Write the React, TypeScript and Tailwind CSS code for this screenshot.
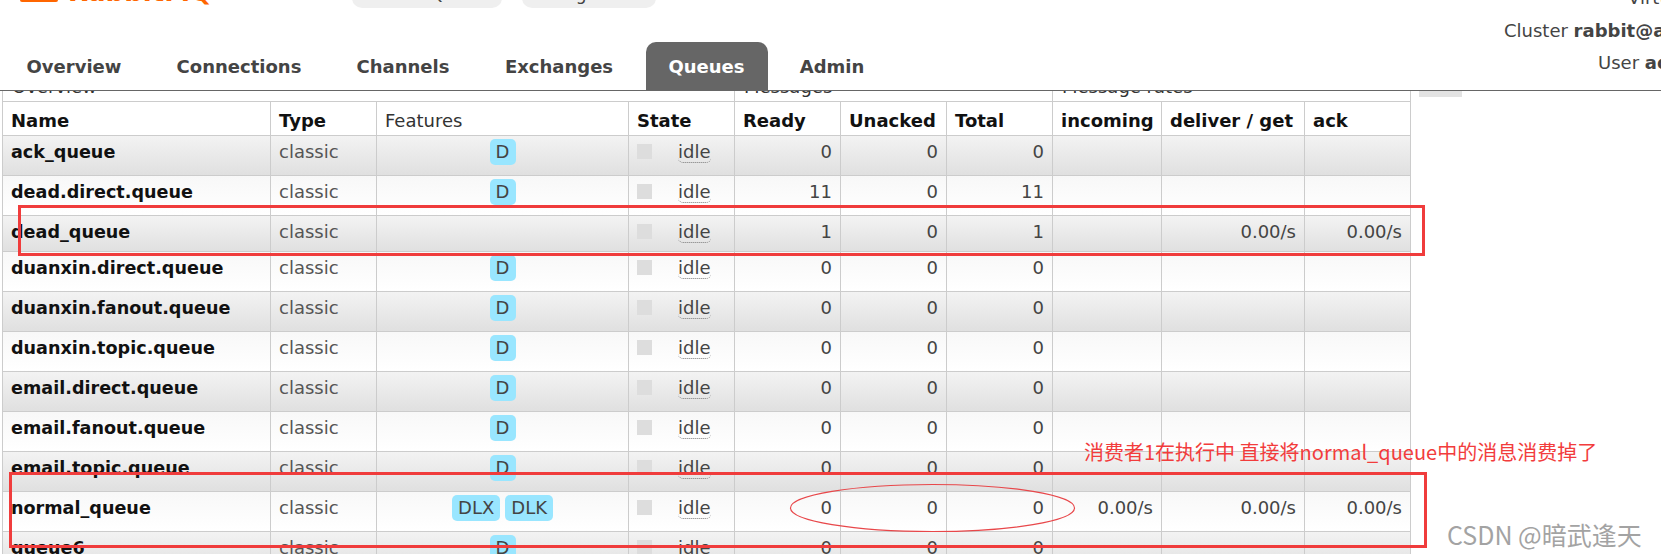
import React from 'react';

type Queue = {
  name: string;
  features: string[];
  ready: number;
  unacked: number;
  total: number;
  incoming?: string;
  deliver?: string;
  ack?: string;
};

const queues: Queue[] = [
  { name: 'ack_queue', features: ['D'], ready: 0, unacked: 0, total: 0 },
  { name: 'dead.direct.queue', features: ['D'], ready: 11, unacked: 0, total: 11 },
  { name: 'dead_queue', features: [], ready: 1, unacked: 0, total: 1, deliver: '0.00/s', ack: '0.00/s' },
  { name: 'duanxin.direct.queue', features: ['D'], ready: 0, unacked: 0, total: 0 },
  { name: 'duanxin.fanout.queue', features: ['D'], ready: 0, unacked: 0, total: 0 },
  { name: 'duanxin.topic.queue', features: ['D'], ready: 0, unacked: 0, total: 0 },
  { name: 'email.direct.queue', features: ['D'], ready: 0, unacked: 0, total: 0 },
  { name: 'email.fanout.queue', features: ['D'], ready: 0, unacked: 0, total: 0 },
  { name: 'email.topic.queue', features: ['D'], ready: 0, unacked: 0, total: 0 },
  {
    name: 'normal_queue',
    features: ['DLX', 'DLK'],
    ready: 0,
    unacked: 0,
    total: 0,
    incoming: '0.00/s',
    deliver: '0.00/s',
    ack: '0.00/s',
  },
  { name: 'queue6', features: ['D'], ready: 0, unacked: 0, total: 0 },
];

const tabs = [
  { label: 'Overview', w: 'w-[141px]' },
  { label: 'Connections', w: 'w-[170px]' },
  { label: 'Channels', w: 'w-[139px]' },
  { label: 'Exchanges', w: 'w-[154px]' },
  { label: 'Queues', w: 'w-[122px]', active: true },
  { label: 'Admin', w: 'w-[110px]' },
];

const GRID =
  'grid w-[1409px] grid-cols-[268px_106px_252px_106px_106px_106px_106px_109px_143px_106px] ml-[2px] border-l border-b border-[#cccccc]';

function Num({ v }: { v?: string | number }) {
  return (
    <div className="border-r border-[#cccccc] pr-[8px] pt-[5px] text-right leading-[22px] text-[#444]">
      {v}
    </div>
  );
}

export default function App() {
  return (
    <div className="relative h-[554px] w-[1661px] overflow-hidden bg-white font-['DejaVu_Sans',sans-serif] text-[18px] text-[#444]">
      {/* header, scrolled so that its top is cut */}
      <header className="flex h-[91px] border-b border-[#666]">
        <div className="flex flex-col justify-between">
          <div className="flex h-[9px] items-start">
            <div className="flex w-[352px] items-start">
              <div className="ml-[20px] mt-[-28.5px] h-[30px] w-[38px] rounded-b-[2px] bg-[#ff6600]" />
              <span className="ml-[10px] mt-[-21px] block text-[26px] font-bold leading-[26px] text-[#ff6600]">
                RabbitMQ
              </span>
              <span className="ml-[8px] mt-[-13px] block text-[13px] leading-[14px] text-[#999]">
                TM
              </span>
            </div>
            <div className="mt-[-21.7px] h-[30px] w-[150px] rounded-[10px] bg-[#efefef] pt-[1px] text-center text-[17px] leading-[30px] text-[#444]">
              RabbitMQ 3.9.7
            </div>
            <div className="ml-[20px] mt-[-21.7px] h-[30px] w-[134px] rounded-[10px] bg-[#efefef] pt-[1px] text-center text-[17px] leading-[30px] text-[#444]">
              Erlang 24.1.2
            </div>
          </div>
          <nav className="flex items-end gap-[9.5px] pl-[3.5px]">
            {tabs.map((t) => (
              <div
                key={t.label}
                className={
                  t.active
                    ? `${t.w} h-[48px] rounded-t-[10px] bg-[#666] pt-[1px] text-center font-bold leading-[48px] text-white`
                    : `${t.w} h-[48px] pt-[1px] text-center font-bold leading-[48px] text-[#444]`
                }
              >
                {t.label}
              </div>
            ))}
          </nav>
        </div>
        <div className="ml-auto mt-[-18px] flex w-[157px] flex-col items-start whitespace-nowrap leading-[32.6px] text-[#444]">
          <div className="ml-[124px]">
            Virtual host <b>All</b>
          </div>
          <div>
            Cluster <b>rabbit@admin</b>
          </div>
          <div className="ml-[94px]">
            User <b>admin</b>
          </div>
        </div>
      </header>

      {/* table, scrolled under the header */}
      <div className="h-[463px] overflow-hidden">
        <div className="-mt-[23px]">
          <div className="flex items-start">
            <div className={`${GRID} h-[34px] bg-white`}>
              <div className="col-span-4 border-r border-[#cccccc] pl-[9px] pt-[8px] leading-[22px] text-[#333]">Overview</div>
              <div className="col-span-3 border-r border-[#cccccc] pl-[9px] pt-[8px] leading-[22px] text-[#333]">Messages</div>
              <div className="col-span-3 border-r border-[#cccccc] pl-[9px] pt-[8px] leading-[22px] text-[#333]">Message rates</div>
            </div>
            <div className="ml-[8px] mt-[7.3px] h-[22px] w-[43px] bg-[#e3e3e3] text-center text-[16px] leading-[18px] text-[#333]">
              +/-
            </div>
          </div>

          <div className={`${GRID} h-[34px] bg-white font-bold text-[#111]`}>
            {['Name', 'Type', 'Features', 'State', 'Ready', 'Unacked', 'Total', 'incoming', 'deliver / get', 'ack'].map(
              (h) => (
                <div
                  key={h}
                  className={
                    h === 'Features'
                      ? 'border-r border-[#cccccc] pl-[8px] pt-[8px] font-normal leading-[22px] text-[#333]'
                      : 'border-r border-[#cccccc] pl-[8px] pt-[8px] leading-[22px]'
                  }
                >
                  {h}
                </div>
              )
            )}
          </div>

          {queues.map((q, i) => (
            <div
              key={q.name}
              className={
                (i % 2 === 0
                  ? `${GRID} bg-linear-to-b from-[#f3f3f3] to-[#e0e0e0]`
                  : `${GRID} bg-linear-to-b from-[#f8f8f8] to-white`) +
                (q.features.length ? ' h-[40px]' : ' h-[35.5px]')
              }
            >
              <div className="border-r border-[#cccccc] pl-[8px] pt-[5px] text-[17.6px] font-bold leading-[22px] text-[#111]">
                {q.name}
              </div>
              <div className="border-r border-[#cccccc] pl-[8px] pt-[5px] leading-[22px] text-[#555]">classic</div>
              <div className="flex justify-center gap-[5px] border-r border-[#cccccc] pt-[3px]">
                {q.features.map((f) => (
                  <span
                    key={f}
                    className="h-[26px] min-w-[26px] rounded-[5px] bg-[#99e6ff] px-[6px] text-center leading-[26px] text-[#444]"
                  >
                    {f}
                  </span>
                ))}
              </div>
              <div className="flex items-start border-r border-[#cccccc] pl-[8px]">
                <span className="mt-[8px] h-[15px] w-[15px] bg-[#dddddd]" />
                <span className="ml-[26px] pt-[5px] leading-[22px] text-[#444]">
                  <span className="rounded-[5px] border-b border-dotted border-[#777]">idle</span>
                </span>
              </div>
              <Num v={q.ready} />
              <Num v={q.unacked} />
              <Num v={q.total} />
              <Num v={q.incoming} />
              <Num v={q.deliver} />
              <Num v={q.ack} />
            </div>
          ))}
        </div>
      </div>

      {/* annotations drawn over the screenshot */}
      <div className="absolute left-[18px] top-[205px] h-[51px] w-[1407px] border-[3px] border-[#f03c3c]" />
      <div className="absolute left-[9px] top-[471.5px] h-[76px] w-[1418px] border-[3px] border-[#f03c3c]" />
      <svg className="absolute left-[789px] top-[483px]" width="287" height="50" viewBox="0 0 287 50">
        <ellipse cx="143.5" cy="25" rx="142" ry="23.5" fill="none" stroke="#e8474a" strokeWidth="1.2" />
      </svg>
      <div className="absolute left-[1084px] top-[442px] whitespace-nowrap font-['Noto_Sans_CJK_SC',sans-serif] text-[20px] leading-[20px] text-[#f23c3c]">
        消费者1在执行中 直接将normal_queue中的消息消费掉了
      </div>
      <div className="absolute left-[1447px] top-[522px] whitespace-nowrap font-['Noto_Sans_CJK_SC',sans-serif] text-[25px] leading-[25px] text-[#a3a3a3]">
        CSDN @暗武逢天
      </div>
    </div>
  );
}
